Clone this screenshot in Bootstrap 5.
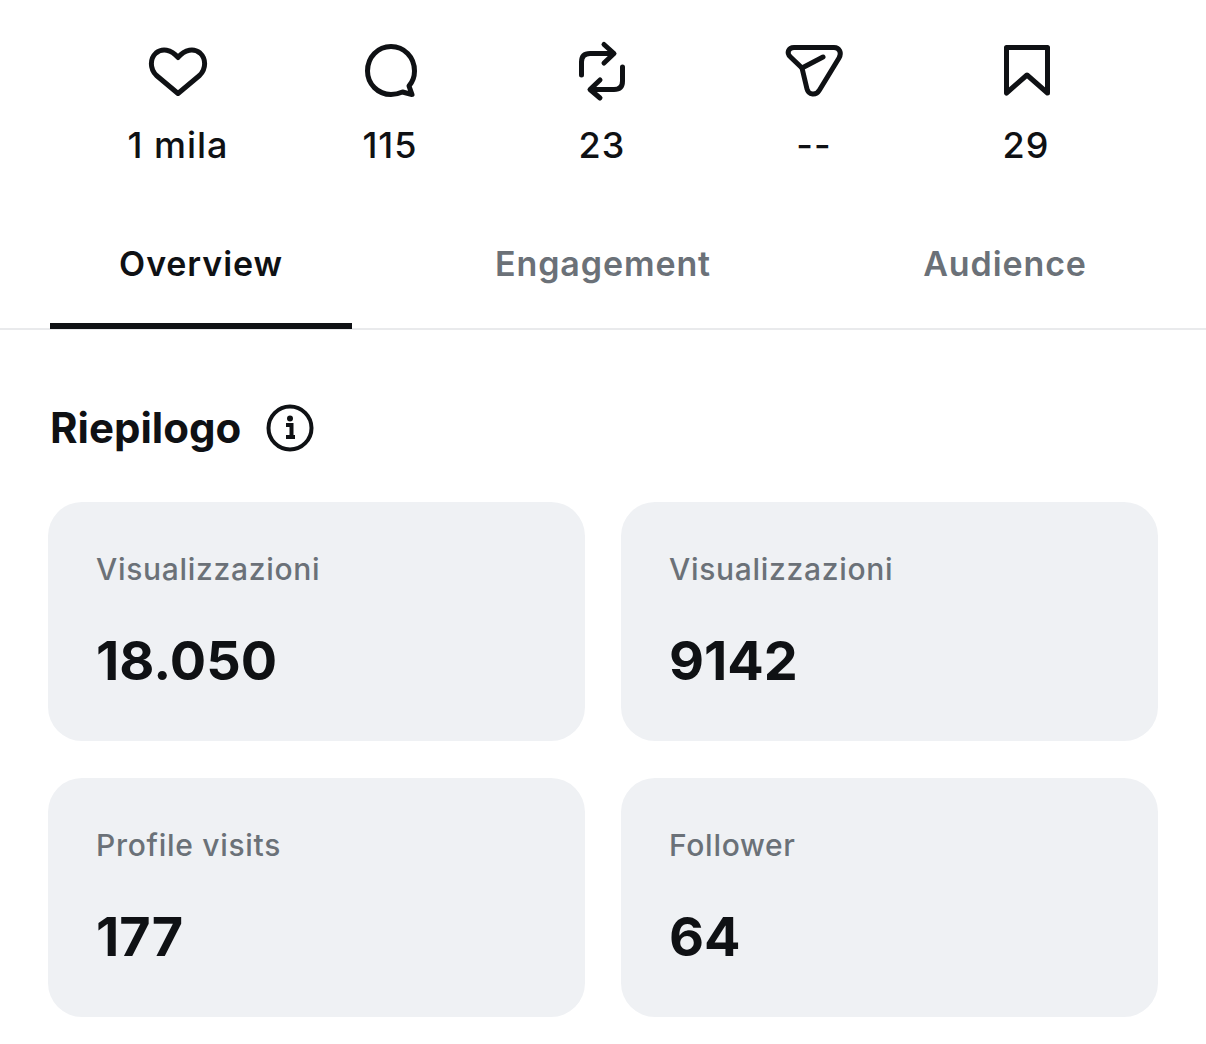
<!DOCTYPE html>
<html lang="it">
<head>
  <meta charset="UTF-8" />
  <meta name="viewport" content="width=device-width, initial-scale=1.0"/>
  <title>Riepilogo</title>
  <link href="https://cdn.jsdelivr.net/npm/bootstrap@5.3.0/dist/css/bootstrap.min.css" rel="stylesheet"/>
  <script src="https://cdn.jsdelivr.net/npm/bootstrap@5.3.0/dist/js/bootstrap.bundle.min.js"></script>
  <style>
    body {
      font-family: Inter, "Liberation Sans", sans-serif;
      color: #0f1114;
      background: #fff;
      overflow: hidden;
    }
    .stat-row {
      padding: 40px 72px 0;
    }
    .stat-item {
      width: 212px;
      text-align: center;
      font-size: 36px;
      font-weight: 500;
      line-height: 42px;
      letter-spacing: 1px;
      text-indent: 1px;
    }
    .stat-item svg {
      display: block;
      margin: 0 auto 20px;
      width: 64px;
      height: 64px;
    }
    .stat-icon {
      fill: none;
      stroke: #0f1114;
      stroke-width: 5;
      stroke-linecap: round;
      stroke-linejoin: round;
    }
    .tab-row {
      margin-top: 77px;
      padding: 0 50px;
      gap: 100px;
      border-bottom: 2px solid #e9eaec;
    }
    .tab-item {
      width: 302px;
      height: 86px;
      margin-bottom: -1px;
      text-align: center;
      font-size: 34px;
      font-weight: 600;
      line-height: 42px;
      letter-spacing: .9px;
      color: #6b7178;
    }
    .tab-active {
      color: #0f1114;
      border-bottom: 6px solid #0f1114;
    }
    .summary-head {
      padding: 72px 50px 0;
      height: 172px;
      font-size: 42px;
      font-weight: 700;
      line-height: 52px;
      gap: 26px;
    }
    .info-icon {
      width: 48px;
      height: 48px;
      margin-top: 2px;
      margin-left: -1px;
    }
    .metric-grid {
      padding: 0 48px;
      display: grid;
      grid-template-columns: 537px 537px;
      column-gap: 36px;
      row-gap: 37px;
    }
    .metric-box {
      height: 239px;
      padding: 47px 48px 0;
      background: #eff1f4;
      border-radius: 34px;
    }
    .metric-label {
      font-size: 30px;
      font-weight: 500;
      line-height: 40px;
      letter-spacing: .7px;
      color: #6b7178;
    }
    .metric-value {
      margin-top: 39px;
      font-size: 54px;
      font-weight: 700;
      line-height: 66px;
    }
  </style>
</head>
<body>
  <div class="d-flex stat-row">
    <div class="stat-item">
      <svg class="stat-icon" viewBox="0 0 64 64"><path d="M32 53.500 L10.500 35.500 C3.500 28.500 4 18.500 10 13 C16 8 25 9 32 17.500 C39 9 48 8 54 13 C60 18.500 60.500 28.500 53.500 35.500 Z"/></svg>
      1 mila
    </div>
    <div class="stat-item">
      <svg class="stat-icon" viewBox="0 0 64 64"><path d="M51 46 L54 54.500 L44.500 52 C41 53.500 37 54.500 33 54.500 C20 54.500 9.500 44 9.500 31 C9.500 17 20 6.500 33 6.500 C46 6.500 56.500 17 56.500 31 C56.500 36.500 54.500 42 51 46 Z"/></svg>
      115
    </div>
    <div class="stat-item">
      <svg class="stat-icon" viewBox="0 0 64 64"><path d="M11.500 35 V22 C11.500 16.500 14.500 13.500 20 13.500 H43"/><path d="M34 4.500 L44 13.500 L34 23"/><path d="M52.500 27 V41 C52.500 46.500 49.500 49.500 44 49.500 H21"/><path d="M30 40 L20 49.500 L30 58"/></svg>
      23
    </div>
    <div class="stat-item">
      <svg class="stat-icon" viewBox="0 0 64 64"><path d="M12 7.500 H52 C57.500 7.500 60 13 57 18 L37.500 50 C34 56 26.500 55 25 49 L20 28 L8.500 17 C4 13 6.500 7.500 12 7.500 Z"/><path d="M20 28 L41 17"/></svg>
      --
    </div>
    <div class="stat-item">
      <svg class="stat-icon" viewBox="0 0 64 64"><path d="M12.500 7.500 H53.500 V53 L33 35 L12.500 53 Z"/></svg>
      29
    </div>
  </div>

  <div class="d-flex tab-row">
    <div class="tab-item tab-active">Overview</div>
    <div class="tab-item">Engagement</div>
    <div class="tab-item">Audience</div>
  </div>

  <div class="d-flex align-items-start summary-head">
    <span>Riepilogo</span>
    <svg class="info-icon" viewBox="0 0 48 48" fill="none">
      <circle cx="24" cy="24" r="21.500" stroke="#0f1114" stroke-width="4"/>
      <circle cx="24" cy="14.500" r="3" fill="#0f1114"/>
      <path d="M20 21 H25.500 V32 M20 33 H29" stroke="#0f1114" stroke-width="4"/>
    </svg>
  </div>

  <div class="metric-grid">
    <div class="metric-box">
      <div class="metric-label">Visualizzazioni</div>
      <div class="metric-value">18.050</div>
    </div>
    <div class="metric-box">
      <div class="metric-label">Visualizzazioni</div>
      <div class="metric-value">9142</div>
    </div>
    <div class="metric-box">
      <div class="metric-label">Profile visits</div>
      <div class="metric-value">177</div>
    </div>
    <div class="metric-box">
      <div class="metric-label">Follower</div>
      <div class="metric-value">64</div>
    </div>
  </div>
</body>
</html>
